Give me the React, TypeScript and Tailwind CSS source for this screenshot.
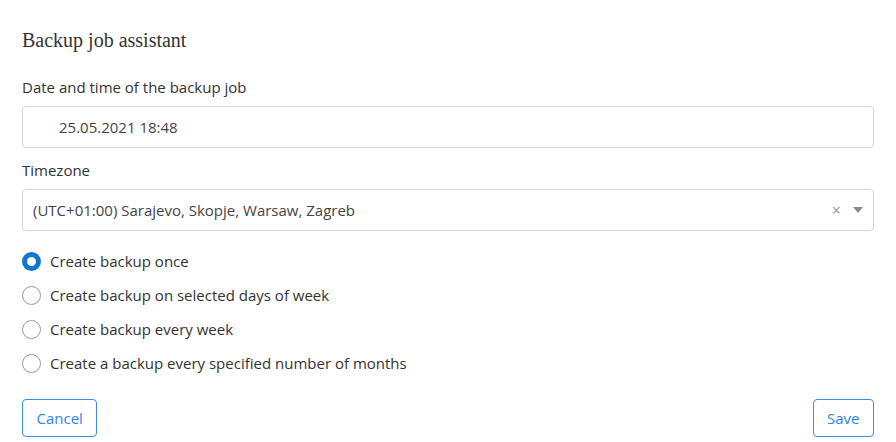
import { useState } from 'react';

const options = [
  'Create backup once',
  'Create backup on selected days of week',
  'Create backup every week',
  'Create a backup every specified number of months',
];

export default function App() {
  const [selected, setSelected] = useState(0);

  return (
    <div className="w-[896px] h-[442px] bg-white px-[22px] pt-[28px] text-[#333] font-['Open_Sans',sans-serif] text-[15px]">
      <h1 className="font-['Liberation_Serif',serif] text-[20px] leading-[24px] text-[#333]">Backup job assistant</h1>

      <div className="mt-[25px] leading-[20px]">Date and time of the backup job</div>
      <div className="mt-[9px] h-[42px] border border-[#d4d7dc] rounded-[4px] flex items-center pl-[36px] text-[#444]">
        25.05.2021 18:48
      </div>

      <div className="mt-[12px] leading-[20px]">Timezone</div>
      <div className="mt-[9px] h-[42px] border border-[#d4d7dc] rounded-[4px] flex items-center pl-[10px] pr-[10px] text-[#444]">
        <span className="flex-1">(UTC+01:00) Sarajevo, Skopje, Warsaw, Zagreb</span>
        <span className="text-[#999] text-[16px] mr-[12px]">×</span>
        <svg width="10" height="6" viewBox="0 0 10 6"><path d="M0 0h10L5 6z" fill="#888" /></svg>
      </div>

      <div className="mt-[20px] flex flex-col gap-[14px]">
        {options.map((o, i) => (
          <label key={o} className="flex items-center gap-[9px] h-[20px] cursor-pointer" onClick={() => setSelected(i)}>
            {selected === i ? (
              <span className="w-[19px] h-[19px] rounded-full border-[5px] border-[#0f76d4] bg-white" />
            ) : (
              <span className="w-[19px] h-[19px] rounded-full border border-[#9a9a9a] bg-white" />
            )}
            <span>{o}</span>
          </label>
        ))}
      </div>

      <div className="mt-[26px] flex justify-between">
        <button className="h-[38px] px-[13.5px] border border-[#3b8fe8] rounded-[4px] text-[#2d86e8] bg-white">Cancel</button>
        <button className="h-[38px] px-[13.5px] border border-[#3b8fe8] rounded-[4px] text-[#2d86e8] bg-white">Save</button>
      </div>
    </div>
  );
}
